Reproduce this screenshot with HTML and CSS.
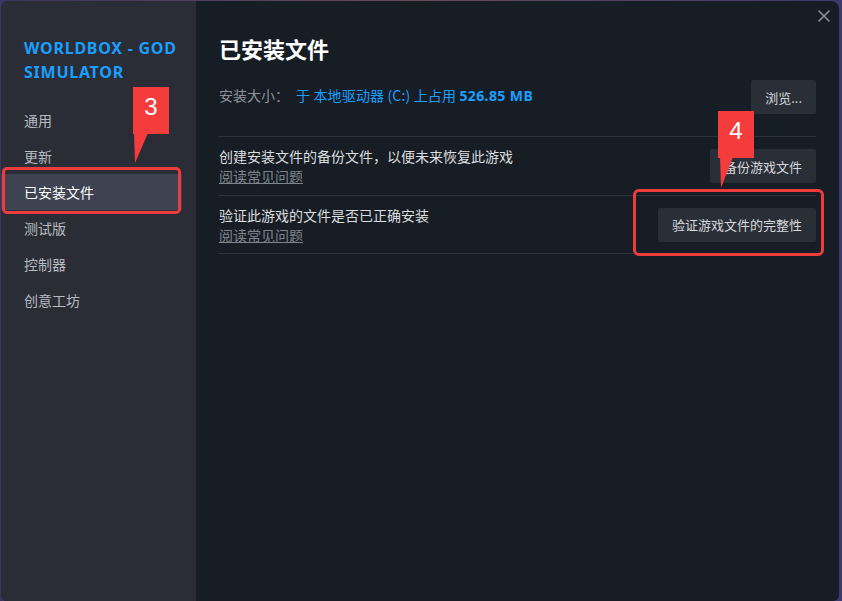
FILE: index.html
```html
<!DOCTYPE html>
<html lang="zh-CN">
<head>
<meta charset="utf-8">
<title>已安装文件</title>
<link rel="stylesheet" href="styles.css">
</head>
<body>
<div class="window">
  <aside class="sidebar">
    <div class="game-title">WORLDBOX - GOD SIMULATOR</div>
    <nav class="nav">
      <div class="nav-item">通用</div>
      <div class="nav-item">更新</div>
      <div class="nav-item active">已安装文件</div>
      <div class="nav-item">测试版</div>
      <div class="nav-item">控制器</div>
      <div class="nav-item">创意工坊</div>
    </nav>
  </aside>
  <main class="content">
    <h1 class="page-title">已安装文件</h1>
    <div class="size-row">
      <div class="size-text"><span class="label">安装大小：</span><span class="value">于 本地驱动器 (C:) 上占用 <b>526.85 MB</b></span></div>
      <button class="btn">浏览...</button>
    </div>
    <div class="row">
      <div class="row-text">
        <div class="desc">创建安装文件的备份文件，以便未来恢复此游戏</div>
        <a class="faq">阅读常见问题</a>
      </div>
      <button class="btn">备份游戏文件</button>
    </div>
    <div class="row">
      <div class="row-text">
        <div class="desc">验证此游戏的文件是否已正确安装</div>
        <a class="faq">阅读常见问题</a>
      </div>
      <button class="btn">验证游戏文件的完整性</button>
    </div>
  </main>
  <div class="close">
    <svg width="14" height="14" viewBox="0 0 14 14"><path d="M1.5 1.5L12.5 12.5M12.5 1.5L1.5 12.5" stroke="#8b929a" stroke-width="1.6" fill="none"/></svg>
  </div>
  <div class="hl hl-3"></div>
  <div class="hl hl-4"></div>
  <div class="callout callout-3">3</div>
  <div class="callout callout-4">4</div>
</div>
</body>
</html>
```
FILE: styles.css
```css
* { box-sizing: border-box; }
html, body { margin: 0; padding: 0; }
body {
  width: 842px;
  height: 601px;
  background: linear-gradient(90deg, #3b3560 0%, #6a4a5a 50%, #3b3a70 100%);
  font-family: "Noto Sans", "Noto Sans CJK SC", sans-serif;
  overflow: hidden;
}
.window {
  position: relative;
  margin: 1px 3px 0 1px;
  height: 600px;
  display: flex;
  border-radius: 8px 8px 6px 6px;
  overflow: hidden;
  background: #171d25;
}
.sidebar {
  width: 195px;
  background: #2a2d35;
  padding-top: 35px;
}
.game-title {
  padding: 0 10px 0 23px;
  color: #1a9fff;
  font-family: "Noto Sans", sans-serif;
  font-weight: 700;
  font-size: 16px;
  line-height: 24px;
  letter-spacing: 0.75px;
}
.nav {
  margin-top: 18px;
  display: flex;
  flex-direction: column;
}
.nav-item {
  height: 36px;
  line-height: 36px;
  padding-left: 23px;
  margin-right: 14px;
  font-family: "Noto Sans CJK SC", sans-serif;
  font-size: 14px;
  color: #b7bbc0;
}
.nav-item.active {
  background: #3d4350;
  color: #ffffff;
}
.content {
  flex: 1;
  padding: 31px 23px 0 23px;
  color: #dcdedf;
  font-family: "Noto Sans CJK SC", sans-serif;
}
.page-title {
  margin: 0;
  font-size: 22px;
  line-height: 32px;
  font-weight: 700;
  color: #ffffff;
}
.size-row {
  margin-top: 16px;
  display: flex;
  align-items: center;
  justify-content: space-between;
  height: 34px;
  margin-bottom: 22px;
}
.size-text { font-size: 14px; line-height: 18px; margin-top: -3px; }
.label { color: #8b929a; margin-right: 7px; }
.value { color: #1a9fff; letter-spacing: 0.15px; }
.value b { font-family: "Noto Sans", sans-serif; font-weight: 700; letter-spacing: 0.4px; }
.btn {
  height: 34px;
  padding: 0 14px;
  border: none;
  border-radius: 2px;
  background: #292e37;
  color: #d7d9dc;
  font-family: "Noto Sans CJK SC", sans-serif;
  font-size: 13px;
}
.row {
  display: flex;
  align-items: center;
  justify-content: space-between;
  border-top: 1px solid #2c313a;
  height: 59px;
}
.row:last-child { border-bottom: 1px solid #2c313a; height: 59px; }
.row-text { display: flex; flex-direction: column; }
.desc { font-size: 14px; line-height: 20px; color: #dcdedf; }
.faq { font-size: 14px; line-height: 20px; color: #7d848c; text-decoration: underline; }
.close {
  position: absolute;
  right: 8px;
  top: 8px;
  width: 14px;
  height: 14px;
  display: flex;
}
.hl {
  position: absolute;
  border: 3px solid #ef3b3b;
  border-radius: 5px;
}
.hl-3 { left: 1px; top: 166px; width: 179px; height: 47px; }
.hl-4 { left: 632px; top: 188px; width: 191px; height: 67px; border-radius: 6px; }
.callout {
  position: absolute;
  width: 36px;
  height: 47px;
  background: #f43c3c;
  color: #ffffff;
  font-family: "Liberation Sans", sans-serif;
  font-size: 24px;
  display: flex;
  justify-content: center;
  padding-top: 8px;
  line-height: 24px;
}
.callout::after {
  content: "";
  position: absolute;
  top: 46px;
  width: 0;
  height: 0;
}
.callout-3 { left: 132px; top: 86px; }
.callout-3::after {
  left: 1px;
  border-top: 30px solid #f43c3c;
  border-left: 1px solid transparent;
  border-right: 13px solid transparent;
}
.callout-4 { left: 717px; top: 110px; }
.callout-4::after {
  left: 2px;
  border-top: 31px solid #f43c3c;
  border-left: 1px solid transparent;
  border-right: 12px solid transparent;
}
```
